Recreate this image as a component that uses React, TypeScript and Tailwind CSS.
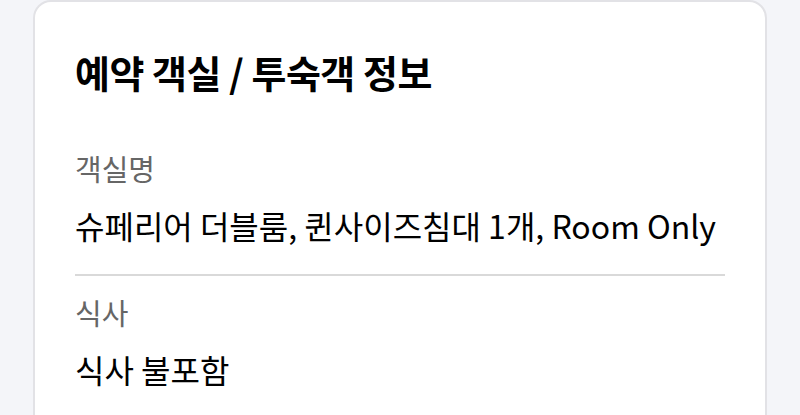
export default function App() {
  return (
    <div className="w-[800px] h-[415px] overflow-hidden bg-[#f4f5f9] px-[33px] [font-family:'Noto_Sans_CJK_KR','Noto_Sans',sans-serif]">
      <div className="h-[440px] rounded-[18px] border-2 border-[#e2e2e6] bg-white px-[40px] pt-[46px]">
        <h2 className="text-[38px] font-bold leading-[48px] text-black tracking-[-0.5px]">
          예약 객실 / 투숙객 정보
        </h2>
        <div className="mt-[54px]">
          <div className="text-[29px] leading-[36px] text-[#666666]">객실명</div>
          <div className="mt-[19px] text-[32px] leading-[40px] text-black">
            슈페리어 더블룸, 퀸사이즈침대 1개, Room Only
          </div>
        </div>
        <div className="mt-[29px] h-[2px] bg-[#d9d9d9]" />
        <div className="mt-[18px]">
          <div className="text-[29px] leading-[36px] text-[#666666]">식사</div>
          <div className="mt-[19px] text-[32px] leading-[40px] text-black">식사 불포함</div>
        </div>
      </div>
    </div>
  );
}
